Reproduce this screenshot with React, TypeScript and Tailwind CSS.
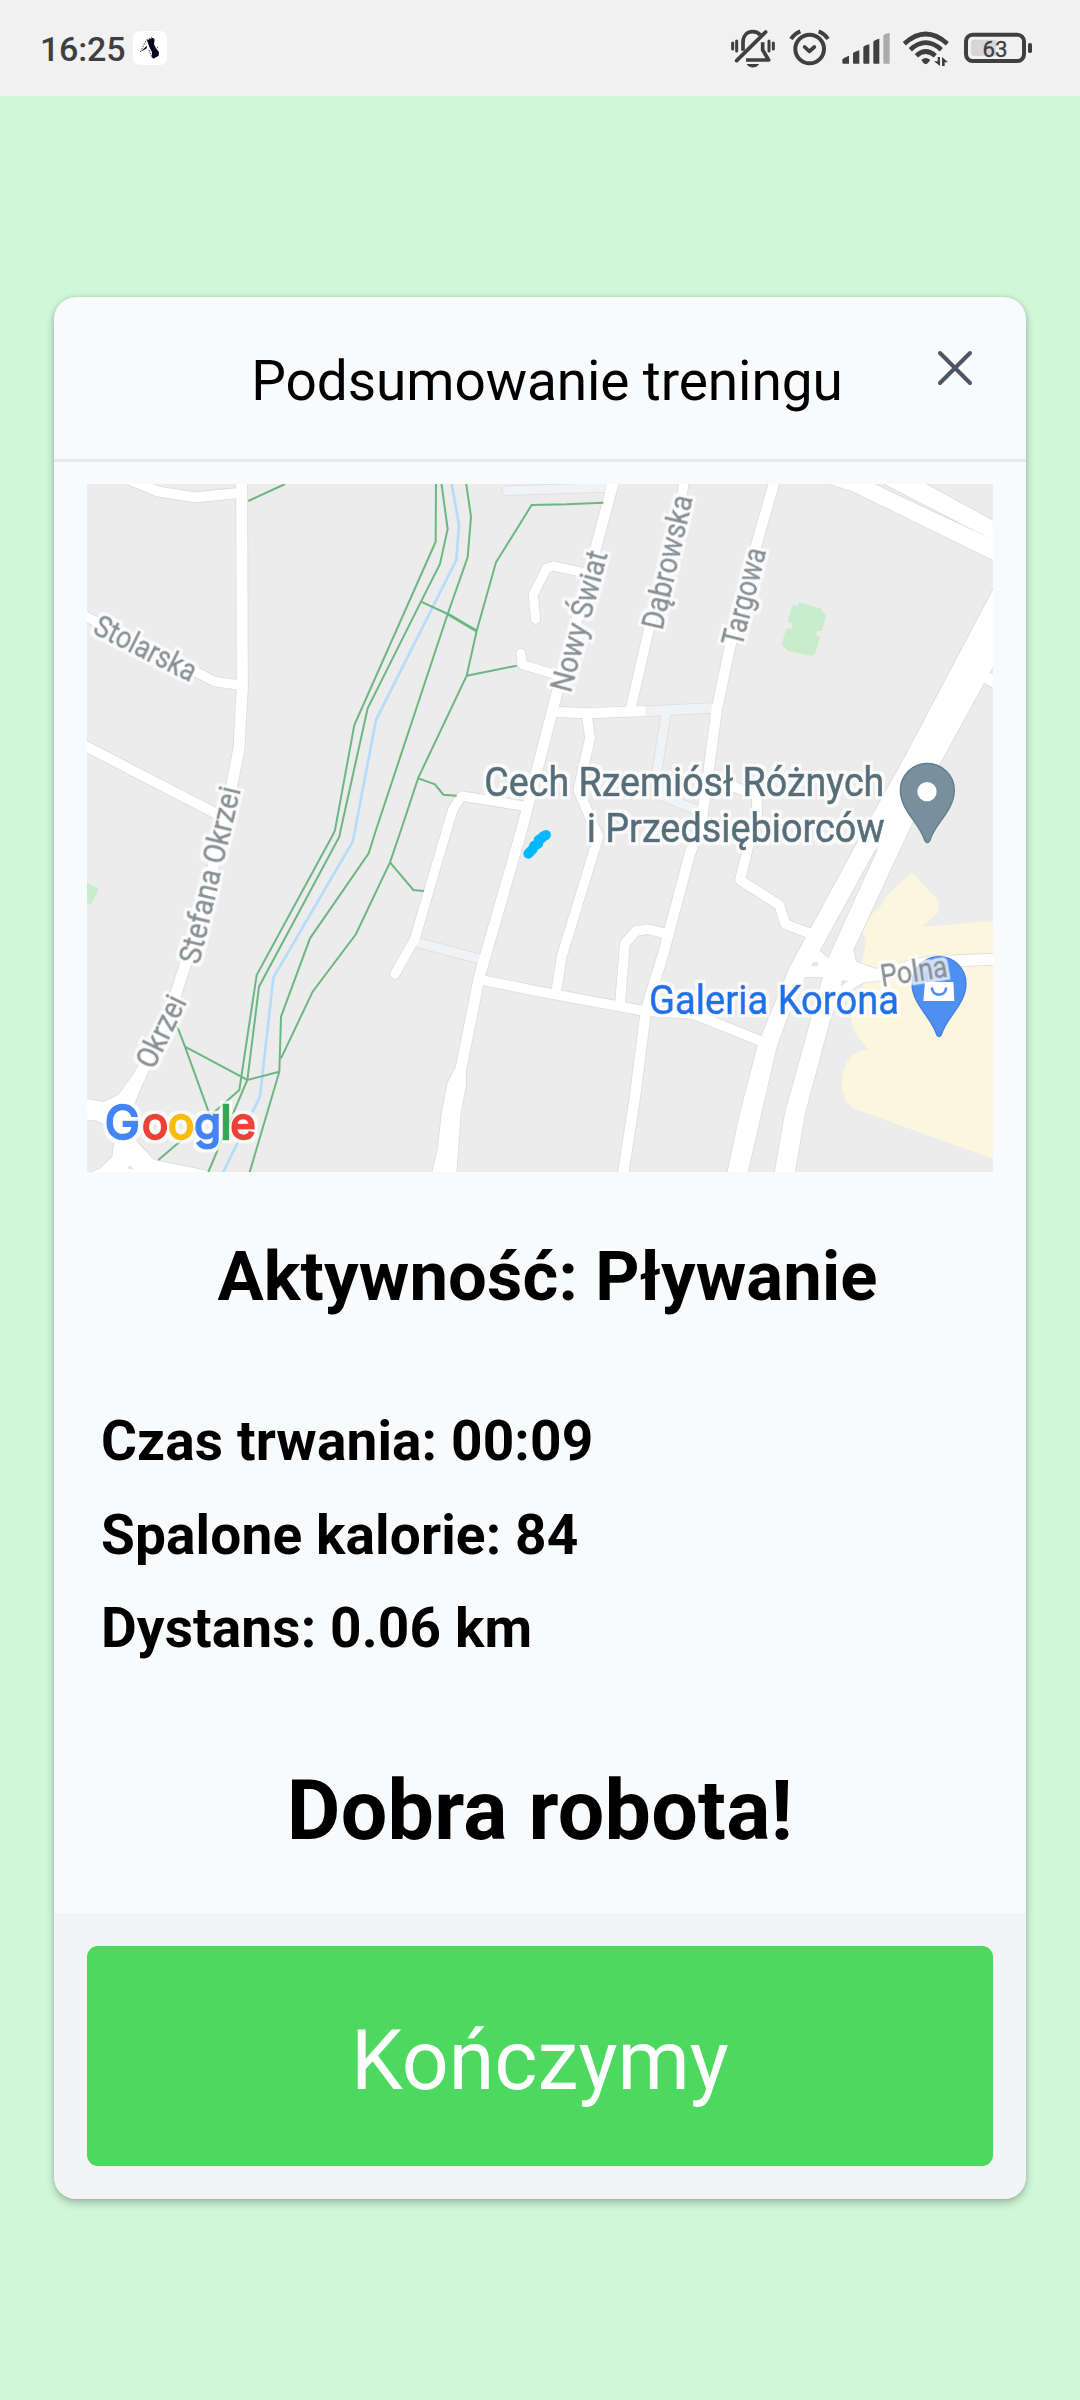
import React from "react";

type Road = { d: string; w: number; soft?: boolean; round?: boolean };

const roads: Road[] = [
  { d: "M1280 32L1590 22", w: 26, soft: true, round: true },
  { d: "M1690 694L1920 683", w: 29, soft: true },
  { d: "M1758 700L1730 880L1750 950L1855 992", w: 27, soft: true },
  { d: "M1010 1387L1205 1438", w: 27, soft: true },
  { d: "M485 0L487 620L477 805L445 970L380 1240L317 1450L285 1550L220 1700L195 1755", w: 33 },
  { d: "M150 0L235 35L347 52L485 38", w: 30 },
  { d: "M0 403L60 430L405 605L480 615", w: 28 },
  { d: "M10 795L420 1007", w: 30 },
  { d: "M1323 520L1326 553L1440 588", w: 27, round: true },
  { d: "M1367 418L1360 343L1400 265L1420 258L1520 280", w: 27, round: true },
  { d: "M1330 978L1145 948L1120 985L1100 1050L1005 1375L945 1482", w: 28, round: true },
  { d: "M1602 0L1420 680L1325 1050L1198 1490L1140 1780L1120 1900", w: 32 },
  { d: "M1813 0L1805 50L1705 455L1650 695", w: 29 },
  { d: "M2085 0L2030 190L1950 500L1910 690L1885 880L1862 1040L1830 1120L1750 1420L1698 1590L1665 1850L1628 2090", w: 31 },
  { d: "M1420 695L1520 700L1695 693", w: 30 },
  { d: "M1520 700L1530 775L1495 930L1555 1070L1445 1430L1428 1540", w: 29 },
  { d: "M1205 1500L1380 1535L1690 1592L1840 1602L2040 1682", w: 29 },
  { d: "M1620 1570L1635 1390L1668 1353L1705 1348L1755 1360", w: 29 },
  { d: "M1900 905L1960 920L2030 945L2032 1010L2005 1100L1980 1200L2098 1275L2116 1332L2200 1365", w: 29 },
  { d: "M2715 590L2760 616", w: 34 },
  { d: "M2340 1482L2410 1482L2500 1455L2560 1445L2760 1437", w: 33 },
];

const areas = [
  "M21 1858L72 1865L115 1845L155 1790L182 1745L214 1755L182 1825L160 1880L170 1985L222 2040L380 2072L400 2085L10 2085L60 2066L97 2030L102 1990L97 1945L50 1922L10 1917Z",
  "M1125 1765L1157 1768L1158 1815L1142 1900L1128 2090L1053 2090L1073 2010L1085 1900L1103 1808Z",
  "M2230 5L2320 35L2750 245L2750 184L2440 40L2370 5Z",
  "M2400 5L2750 186L2750 128L2525 5Z",
  "M2750 308L2475 830L2325 1100L2130 1460L2035 1690L1980 1900L1940 2090L2000 2090L2090 1700L2115 1630L2175 1490L2220 1410L2385 1110L2395 1105L2245 1435L2190 1630L2115 1900L2082 2090L2142 2090L2175 1900L2250 1620L2285 1520L2320 1410L2580 850L2750 540Z",
  "M2220 1412L2245 1435L2320 1410L2328 1445L2390 1468L2410 1500L2350 1508L2285 1545L2235 1492L2175 1490L2185 1458L2212 1458L2195 1440Z",
];

const paths =
  "M505 63L615 12M1068 0L1067 185L823 735L765 1050L760 1062L530 1485L478 1830L390 1907L235 2040M1083 0L1103 147L1080 252L1023 365L863 685L782 1050L778 1070L537 1520L502 1800L385 2076M1157 0L1173 110L1163 232L1103 402L888 1050L866 1120L690 1375L603 1610L598 1775L508 2080M1570 68L1460 73L1355 75L1248 247L1190 453L1160 587L1015 893L963 1050L930 1147L828 1362L698 1535L603 1735M1023 365L1103 402L1190 453M1160 587L1310 557M1015 895L1065 913L1090 944L1130 947M930 1147L1000 1230L1032 1233M285 1635L295 1648L315 1700L390 1907M315 1700L502 1800L598 1775";

const streets = [
  { t: "Stolarska", x: 34, y: 459, a: 26.6, l: 332 },
  { t: "Stefana Okrzei", x: 358, y: 1456, a: -76.7, l: 542 },
  { t: "Okrzei", x: 221, y: 1772, a: -64, l: 230 },
  { t: "Nowy Świat", x: 1472, y: 641, a: -75, l: 434 },
  { t: "Dąbrowska", x: 1747, y: 453, a: -77, l: 410 },
  { t: "Targowa", x: 1986, y: 503, a: -75.7, l: 300 },
  { t: "Polna", x: 2406, y: 1520, a: -8.5, l: 202 },
];

function TrainingMap() {
  return (
    <svg className="block h-[688px] w-[906px] bg-[#ececec]" viewBox="21 12 2718 2064" fontFamily="Roboto, sans-serif">
      <filter id="halo" x="-10%" y="-20%" width="120%" height="140%">
        <feMorphology in="SourceAlpha" operator="dilate" radius="9" result="fat" />
        <feFlood floodColor="#fff" floodOpacity="0.72" />
        <feComposite in2="fat" operator="in" />
        <feMerge>
          <feMergeNode />
          <feMergeNode in="SourceGraphic" />
        </feMerge>
      </filter>
      <path fill="#c9ecca" d="M2158 367L2226 387V397L2239 401L2226 453L2212 452L2208 464L2220 470L2205 522L2192 528L2125 513L2105 495L2118 447L2137 445V430L2123 425L2137 375L2155 377ZM21 1208L57 1228L33 1274L21 1268Z" />
      <path fill="#fdf6df" d="M2495 1177L2576 1263V1295L2525 1342L2739 1323V2035L2680 2015L2320 1885L2298 1865L2286 1825V1790L2298 1750L2320 1725L2340 1712L2362 1710L2355 1695L2325 1660L2314 1625L2320 1550L2380 1480L2345 1450L2360 1378L2346 1360L2365 1315L2410 1270L2413 1255Z" />
      <g fill="none" stroke="#dcdde0" strokeLinejoin="round">
        {roads.map((r) => (
          <path key={r.d} d={r.d} strokeWidth={r.w + 5} strokeLinecap={r.round ? "round" : "butt"} />
        ))}
        {areas.map((d) => (
          <path key={d} d={d} strokeWidth={5} />
        ))}
      </g>
      <g fill="none" strokeLinejoin="round">
        {roads.map((r) => (
          <path key={r.d} d={r.d} stroke={r.soft ? "#f1f2f4" : "#fff"} strokeWidth={r.w} strokeLinecap={r.round ? "round" : "butt"} />
        ))}
      </g>
      <g fill="#fff">
        {areas.map((d) => (
          <path key={d} d={d} />
        ))}
      </g>
      <path fill="#e4e5e7" d="M148 2056L165 2070L142 2066ZM2210 1443L2218 1456L2195 1457ZM2285 1500L2305 1502L2282 1520Z" />
      <path fill="none" stroke="#b5dcf8" strokeWidth="8" d="M1113 0L1137 135L1129 240L888 720L825 1050L818 1085L580 1493L540 1850L428 2080" />
      <path fill="none" stroke="#6cb682" strokeWidth="6" d={paths} />
      <path fill="none" stroke="#6cb682" strokeWidth="8" d="M1103 402L1190 453" />
      <path fill="none" stroke="#00b8ff" strokeWidth="30" strokeLinecap="round" d="M1345 1121L1358 1108M1362 1098L1375 1091M1376 1080L1386 1074M1388 1070L1398 1065" />

      <path fill="#78909c" stroke="#607d8b" strokeWidth="4" d="M2542 850C2497 850 2461 886 2461 931C2461 992 2520 1030 2535 1083Q2542 1094 2549 1083C2564 1030 2623 992 2623 931C2623 886 2587 850 2542 850Z" />
      <circle cx="2541" cy="935" r="29" fill="#fff" />
      <path fill="#4f8ff2" stroke="#437fe0" strokeWidth="4" d="M2577 1430C2532 1430 2496 1466 2496 1511C2496 1572 2555 1612 2570 1664Q2577 1676 2584 1664C2599 1612 2658 1572 2658 1511C2658 1466 2622 1430 2577 1430Z" />
      <path fill="#fff" d="M2535 1506H2620L2623 1563H2530Z" />
      <path fill="none" stroke="#4f8ff2" strokeWidth="8" strokeLinecap="round" d="M2556 1526C2560 1550 2594 1550 2598 1526" />

      <g fontSize="92" fill="#8a8f93" stroke="#8a8f93" strokeWidth="1.5">
        {streets.map((s) => (
          <text key={s.t} filter="url(#halo)" transform={`translate(${s.x} ${s.y}) rotate(${s.a})`} textLength={s.l} lengthAdjust="spacingAndGlyphs">
            {s.t}
          </text>
        ))}
      </g>
      <g fontSize="120" strokeWidth="2" filter="url(#halo)">
        <text x="1213" y="949" textLength="1200" lengthAdjust="spacingAndGlyphs" fill="#546e7a" stroke="#546e7a">
          Cech Rzemiósł Różnych
        </text>
        <text x="1520" y="1086" textLength="894" lengthAdjust="spacingAndGlyphs" fill="#546e7a" stroke="#546e7a">
          i Przedsiębiorców
        </text>
        <text x="1707" y="1601" textLength="750" lengthAdjust="spacingAndGlyphs" fill="#1a73e8" stroke="#1a73e8">
          Galeria Korona
        </text>
      </g>
      <text filter="url(#halo)" fontFamily="Inter, sans-serif" fontSize="131" y="1976" strokeWidth="7" x="74 186 264 343 421 451">
        <tspan fontSize="141" fill="#4285f4" stroke="#4285f4">G</tspan>
        <tspan fill="#ea4335" stroke="#ea4335">o</tspan>
        <tspan fill="#fbbc05" stroke="#fbbc05">o</tspan>
        <tspan fill="#4285f4" stroke="#4285f4">g</tspan>
        <tspan fontSize="141" fill="#34a853" stroke="#34a853">l</tspan>
        <tspan fill="#ea4335" stroke="#ea4335">e</tspan>
      </text>
    </svg>
  );
}

function StatusBar() {
  return (
    <header className="flex h-24 items-start bg-[#f1f1f1] pl-10 pr-[47px] text-[#3f3f3f]">
      <span className="mt-[29px] w-[86px] text-[34px] font-medium leading-[40px] tracking-[-0.2px]">16:25</span>
      <svg className="ml-[7px] mt-[31px] h-[34px] w-[34px] rounded-[7px] bg-white" viewBox="399 93 102 102">
        <path fill="#06061c" d="M441 121L459 113L464 119L462 133L468 145L477 156L476 167L460 176L455 170L456 157L448 141ZM424 154L437 140L441 137L440 145L432 150Z" />
        <path fill="none" stroke="#33334a" strokeWidth="2.5" strokeDasharray="5 3" d="M421 156L439 120L456 112M462 136C458 146 470 148 475 139M447 150L457 174" />
      </svg>
      <div className="ml-auto mt-7 flex h-[42px]">
        <svg className="h-[42px] w-[46px]" viewBox="90 84 138 126" fill="none" stroke="currentColor" strokeWidth="11" strokeLinecap="round">
          <path d="M98 129V147M110 123V153M207 123V153M220 129V147" strokeWidth="9" />
          <path d="M129 152V128C129 105 143 95 158 95C168 95 176 99 181 105" strokeLinecap="butt" />
          <path d="M188 127V150L206 180H138" strokeLinejoin="round" strokeLinecap="butt" />
          <path d="M110 182L197 96" />
          <path d="M140 192H177C172 206 145 206 140 192Z" fill="currentColor" stroke="none" />
        </svg>
        <svg className="ml-[13px] h-[42px] w-[41px]" viewBox="267 84 123 126" fill="none" stroke="currentColor" strokeWidth="12">
          <circle cx="329" cy="147" r="43" />
          <path d="M314 141L328 154L343 141" strokeLinecap="round" strokeLinejoin="round" strokeWidth="11" />
          <path d="M273 117Q283 101 301 94M356 94Q374 101 384 117" />
        </svg>
        <svg className="ml-3 h-[42px] w-[48px]" viewBox="426 84 144 126" fill="currentColor">
          <path d="M427 179Q427 175 447 167V191H430Q427 191 427 188ZM459 160Q459 157 478 151V191H462Q459 191 459 188ZM490 142Q490 138 508 133V191H493Q490 191 490 188ZM520 126Q520 121 538 116V191H523Q520 191 520 188Z" />
          <path fill="#ababab" d="M550 109Q550 102 569 99V191H553Q550 191 550 188Z" />
        </svg>
        <svg className="ml-3 h-[42px] w-[48px]" viewBox="606 84 144 126" fill="none" stroke="currentColor" strokeWidth="14">
          <path d="M613 131Q677 73 742 131M631 149Q677 107 724 149M649 167Q677 142 706 167" />
          <path fill="currentColor" stroke="none" d="M664 180Q677 168 691 180L683 190Q677 195 671 190Z" />
          <path fill="currentColor" stroke="none" d="M713 171H720V198L702 184H713ZM726 198V171L744 187H734V198Z" />
        </svg>
        <svg className="ml-[13px] h-[42px] w-[70px]" viewBox="789 84 210 126">
          <rect x="798" y="104" width="174" height="79" rx="20" fill="none" stroke="currentColor" strokeWidth="12" />
          <path fill="#d6d6d6" d="M822 119H888V168H822Q813 168 813 159V128Q813 119 822 119Z" />
          <rect x="984" y="129" width="12" height="30" rx="5" fill="currentColor" />
          <text x="885" y="170" textAnchor="middle" fontFamily="Roboto, sans-serif" fontSize="67" fill="currentColor" stroke="currentColor" strokeWidth="1">
            63
          </text>
        </svg>
      </div>
    </header>
  );
}

export default function App() {
  return (
    <div className="h-[2400px] w-[1080px] overflow-hidden bg-[#d0f7d9] font-['Roboto',sans-serif] text-black">
      <StatusBar />
      <main className="mx-[54px] mt-[201px] h-[1902px] rounded-[22px] bg-[#f9fafc] shadow-[0_4px_8px_rgba(0,0,0,0.24),0_0_4px_rgba(0,0,0,0.12)]">
        <div className="relative flex h-[165px] justify-center border-b-[3px] border-gray-200 pl-[14px] pt-[52px]">
          <h1 className="text-[55px] leading-[64px] tracking-[-0.1px]">Podsumowanie treningu</h1>
          <button className="absolute right-[53px] top-[53px]" aria-label="Zamknij">
            <svg className="h-9 w-9" viewBox="0 0 36 36" fill="none" stroke="#4b5563" strokeWidth="4" strokeLinecap="round">
              <path d="M3 3L33 33M33 3L3 33" />
            </svg>
          </button>
        </div>
        <section className="h-[1451px] px-[33px] pt-[22px]">
          <TrainingMap />
          <h2 className="mt-[65px] pl-[15px] text-center text-[68.75px] font-bold leading-[80px] tracking-[0.15px]">Aktywność: Pływanie</h2>
          <div className="mt-[78px] pl-[14px] text-[55px] font-bold leading-[93.5px] tracking-[0.12px]">
            <p>Czas trwania: 00:09</p>
            <p>Spalone kalorie: 84</p>
            <p>Dystans: 0.06 km</p>
          </div>
          <p className="mt-[87px] text-center text-[82.5px] font-bold leading-[96px] tracking-[0.25px]">Dobra robota!</p>
        </section>
        <footer className="h-[286px] rounded-b-[22px] bg-[#f2f4f6] px-[33px] pt-[33px]">
          <button className="flex h-[220px] w-full items-start justify-center rounded-[11px] bg-[#4dd95f] pt-[67px] text-[82.5px] leading-[96px] text-white">Kończymy</button>
        </footer>
      </main>
    </div>
  );
}
